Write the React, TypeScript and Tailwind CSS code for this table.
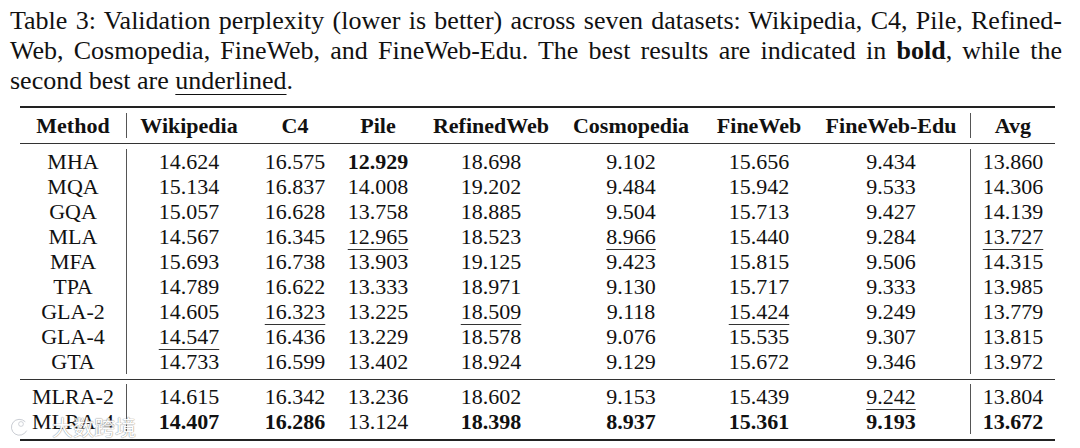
const headers = ["Method", "Wikipedia", "C4", "Pile", "RefinedWeb", "Cosmopedia", "FineWeb", "FineWeb-Edu", "Avg"];

// "*" = best (bold), "_" = second best (underlined)
const baseline: string[][] = [
  ["MHA", "14.624", "16.575", "*12.929", "18.698", "9.102", "15.656", "9.434", "13.860"],
  ["MQA", "15.134", "16.837", "14.008", "19.202", "9.484", "15.942", "9.533", "14.306"],
  ["GQA", "15.057", "16.628", "13.758", "18.885", "9.504", "15.713", "9.427", "14.139"],
  ["MLA", "14.567", "16.345", "_12.965", "18.523", "_8.966", "15.440", "9.284", "_13.727"],
  ["MFA", "15.693", "16.738", "13.903", "19.125", "9.423", "15.815", "9.506", "14.315"],
  ["TPA", "14.789", "16.622", "13.333", "18.971", "9.130", "15.717", "9.333", "13.985"],
  ["GLA-2", "14.605", "_16.323", "13.225", "_18.509", "9.118", "_15.424", "9.249", "13.779"],
  ["GLA-4", "_14.547", "16.436", "13.229", "18.578", "9.076", "15.535", "9.307", "13.815"],
  ["GTA", "14.733", "16.599", "13.402", "18.924", "9.129", "15.672", "9.346", "13.972"],
];

const ours: string[][] = [
  ["MLRA-2", "14.615", "16.342", "13.236", "18.602", "9.153", "15.439", "_9.242", "13.804"],
  ["MLRA-4", "*14.407", "*16.286", "13.124", "*18.398", "*8.937", "*15.361", "*9.193", "*13.672"],
];

const gridCols = "grid grid-cols-[107px_124px_88px_78px_148px_132px_124px_149px_85px]";

function cellClass(i: number) {
  if (i === 0) return "border-r border-[#555]";
  if (i === 7) return "pr-[9px]";
  if (i === 8) return "border-l border-[#555]";
  return "";
}

function Cell({ value, i }: { value: string; i: number }) {
  let content: React.ReactNode = value;
  if (value.startsWith("*")) {
    content = <span className="font-bold">{value.slice(1)}</span>;
  } else if (value.startsWith("_")) {
    content = (
      <span className="underline decoration-1 underline-offset-[5px] decoration-[#333]">{value.slice(1)}</span>
    );
  }
  return <div className={`text-center h-[25px] leading-[25px] ${cellClass(i)}`}>{content}</div>;
}

function Group({ rows }: { rows: string[][] }) {
  return (
    <div className="flex flex-col">
      {rows.map((row) => (
        <div key={row[0]} className={gridCols}>
          {row.map((v, i) => (
            <Cell key={i} value={v} i={i} />
          ))}
        </div>
      ))}
    </div>
  );
}

export default function App() {
  return (
    <div
      className="relative w-[1080px] h-[448px] bg-white text-[#111] overflow-hidden"
      style={{ fontFamily: '"Liberation Serif", "Times New Roman", serif' }}
    >
      {/* Caption */}
      <div className="pl-[10px] pr-[18px] pt-[6px] text-[26px] leading-[30px]">
        <div className="whitespace-nowrap [text-align-last:justify]">
          Table 3: Validation perplexity (lower is better) across seven datasets: Wikipedia, C4, Pile, Refined-
        </div>
        <div className="whitespace-nowrap [text-align-last:justify]">
          Web, Cosmopedia, FineWeb, and FineWeb-Edu. The best results are indicated in{" "}
          <span className="font-bold">bold</span>, while the
        </div>
        <div className="whitespace-nowrap">
          second best are <span className="underline decoration-1 underline-offset-[5px]">underlined</span>.
        </div>
      </div>

      {/* Table */}
      <div className="ml-[20px] mt-[10px] w-[1035px] text-[22px]">
        <div className="h-[2px] bg-[#222]" />
        <div className="py-[5px]">
          <div className={gridCols}>
            {headers.map((h, i) => (
              <div key={h} className={`text-center font-bold h-[25px] leading-[25px] ${cellClass(i)}`}>
                {h}
              </div>
            ))}
          </div>
        </div>
        <div className="h-px bg-[#333]" />
        <div className="pt-[5px] pb-[5px]">
          <Group rows={baseline} />
        </div>
        <div className="h-px bg-[#333]" />
        <div className="pt-[4px] pb-[5px]">
          <Group rows={ours} />
        </div>
        <div className="h-[2px] bg-[#222]" />
      </div>

      {/* Watermark */}
      <div className="absolute left-[10px] top-[416px] flex items-center gap-[22px] opacity-90">
        <svg width="20" height="20" viewBox="0 0 20 20" fill="none">
          <path d="M15 4.5A8 8 0 1 0 16.5 14" stroke="#ffffff" strokeWidth="3" strokeLinecap="round" />
          <path d="M15 4.5A8 8 0 1 0 16.5 14" stroke="#9ca3af" strokeWidth="0.6" strokeLinecap="round" />
          <circle cx="11" cy="7" r="2.4" fill="#ffffff" stroke="#9ca3af" strokeWidth="0.5" />
        </svg>
        <span
          className="text-[21px] leading-none text-white [text-shadow:0_0_1px_#888,0_0_1px_#888]"
          style={{ fontFamily: '"Noto Sans CJK SC", sans-serif' }}
        >
          大数跨境
        </span>
      </div>
    </div>
  );
}
